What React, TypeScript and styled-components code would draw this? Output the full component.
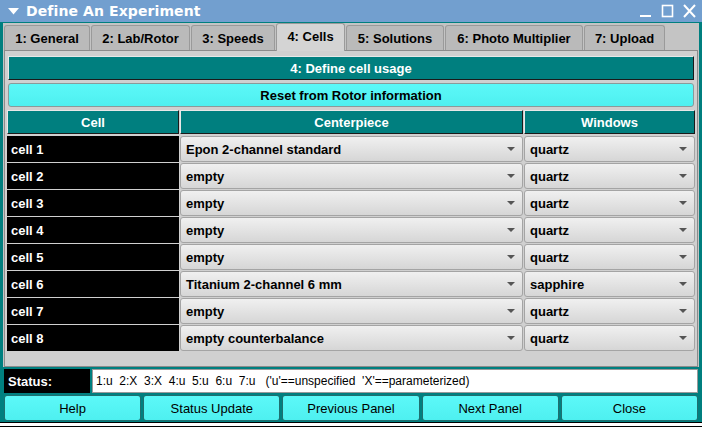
import React from "react";
import styled, { createGlobalStyle } from "styled-components";

const Global = createGlobalStyle`
  html, body { margin: 0; padding: 0; background: #ffffff; }
  * { box-sizing: border-box; }
`;

const Window = styled.div`
  width: 702px;
  height: 427px;
  display: flex;
  flex-direction: column;
  background: #007f7f;
  font-family: "Liberation Sans", Arial, sans-serif;
  overflow: hidden;
`;

const TitleBar = styled.div`
  height: 22px;
  flex: none;
  background: #729fcf;
  display: flex;
  align-items: center;
  padding: 0 6px 0 8px;
  color: #ffffff;
`;

const TitleText = styled.span`
  font-family: "DejaVu Sans", sans-serif;
  font-weight: bold;
  font-size: 14px;
  margin-left: 7px;
  flex: 1;
  letter-spacing: 0.1px;
`;

const Controls = styled.div`
  display: flex;
  gap: 9px;
  align-items: center;
`;

const Body = styled.div`
  flex: 1;
  display: flex;
  flex-direction: column;
  padding: 1px 4px 0 4px;
`;

const TabWidget = styled.div`
  background: #c4c4c4;
  display: flex;
  flex-direction: column;
  height: 344px;
  margin: 0 -1px;
  padding: 0 1px;
`;

const TabBar = styled.div`
  height: 27px;
  display: flex;
  align-items: flex-end;
`;

const Tab = styled.div<{ $w: number; $active?: boolean }>`
  width: ${(p) => p.$w}px;
  height: ${(p) => (p.$active ? 28 : 25)}px;
  margin-bottom: ${(p) => (p.$active ? -1 : 0)}px;
  position: relative;
  z-index: ${(p) => (p.$active ? 2 : 1)};
  background: ${(p) => (p.$active ? "#d4d4d4" : "#bababa")};
  border: 1px solid #9a9a9a;
  border-bottom: none;
  border-radius: 3px 3px 0 0;
  margin-right: 1px;
  display: flex;
  align-items: center;
  justify-content: center;
  font-weight: bold;
  font-size: 13px;
  color: #000000;
  padding-bottom: ${(p) => (p.$active ? 3 : 0)}px;
`;

const Panel = styled.div`
  flex: 1;
  background: #d0d0d0;
  border: 1px solid #8c8c8c;
  display: flex;
  flex-direction: column;
  padding: 5px 3px 0 2px;
`;

const Banner = styled.div`
  height: 24px;
  margin: 0 0 3px 1px;
  background: #007f7f;
  border: 1px solid;
  border-color: #e8e8e8 #1a1a1a #1a1a1a #e8e8e8;
  color: #ffffff;
  font-weight: bold;
  font-size: 13px;
  display: flex;
  align-items: center;
  justify-content: center;
`;

const WideButton = styled.div`
  height: 24px;
  margin: 0 0 3px 1px;
  background: linear-gradient(#5cf8f8, #4ef0f0);
  border: 1px solid #8a9a9a;
  border-radius: 3px;
  color: #000000;
  font-weight: bold;
  font-size: 13px;
  display: flex;
  align-items: center;
  justify-content: center;
`;

const Grid = styled.div`
  display: grid;
  grid-template-columns: 172px 343px 171px;
  column-gap: 1px;
  row-gap: 1px;
`;

const HeaderCell = styled.div`
  height: 24px;
  margin-bottom: 1px;
  background: #007f7f;
  border: 1px solid;
  border-color: #e8e8e8 #1a1a1a #1a1a1a #e8e8e8;
  color: #ffffff;
  font-weight: bold;
  font-size: 13px;
  display: flex;
  align-items: center;
  justify-content: center;
`;

const CellLabel = styled.div`
  height: 26px;
  background: #000000;
  color: #ffffff;
  font-weight: bold;
  font-size: 13px;
  display: flex;
  align-items: center;
  padding-left: 4px;
`;

const Combo = styled.div`
  height: 26px;
  background: linear-gradient(#f0f0f0, #d6d6d6);
  border: 1px solid #a4a4a4;
  border-radius: 3px;
  display: flex;
  align-items: center;
  padding: 0 7px 0 5px;
  color: #000000;
  font-weight: bold;
  font-size: 13px;
`;

const ComboText = styled.span`
  flex: 1;
`;

const Arrow = styled.span`
  width: 0;
  height: 0;
  border-left: 4px solid transparent;
  border-right: 4px solid transparent;
  border-top: 4px solid #555555;
`;

const StatusRow = styled.div`
  height: 24px;
  margin-top: 2px;
  display: flex;
  gap: 2px;
`;

const StatusLabel = styled.div`
  width: 86px;
  background: #000000;
  color: #ffffff;
  font-weight: bold;
  font-size: 13px;
  display: flex;
  align-items: center;
  padding-left: 4px;
`;

const StatusField = styled.div`
  flex: 1;
  background: #ffffff;
  border: 1px solid #9a9a9a;
  font-size: 12px;
  color: #000000;
  display: flex;
  align-items: center;
  padding-left: 3px;
  white-space: pre;
`;

const ButtonRow = styled.div`
  height: 26px;
  margin-top: 2px;
  display: grid;
  grid-template-columns: repeat(5, 1fr);
  gap: 2px;
`;

const Button = styled.div`
  background: linear-gradient(#5cf8f8, #4ef0f0);
  border: 1px solid #1f6f6f;
  border-radius: 3px;
  color: #000000;
  font-size: 13px;
  display: flex;
  align-items: center;
  justify-content: center;
`;

const BottomEdge = styled.div`
  flex: 1;
  margin: 1px -4px 0 -4px;
  border-top: 1px solid #000000;
  background: #ffffff;
  border-bottom: 1px solid #000000;
`;

const tabs = [
  { label: "1: General", w: 86 },
  { label: "2: Lab/Rotor", w: 99 },
  { label: "3: Speeds", w: 84 },
  { label: "4: Cells", w: 69, active: true },
  { label: "5: Solutions", w: 98 },
  { label: "6: Photo Multiplier", w: 138 },
  { label: "7: Upload", w: 81 },
];

const rows = [
  ["cell 1", "Epon 2-channel standard", "quartz"],
  ["cell 2", "empty", "quartz"],
  ["cell 3", "empty", "quartz"],
  ["cell 4", "empty", "quartz"],
  ["cell 5", "empty", "quartz"],
  ["cell 6", "Titanium 2-channel 6 mm", "sapphire"],
  ["cell 7", "empty", "quartz"],
  ["cell 8", "empty counterbalance", "quartz"],
];

const buttons = ["Help", "Status Update", "Previous Panel", "Next Panel", "Close"];

export default function App() {
  return (
    <>
      <Global />
      <Window>
        <TitleBar>
          <svg width="11" height="7" viewBox="0 0 11 7">
            <polygon points="0,0 11,0 5.5,6.5" fill="#ffffff" />
          </svg>
          <TitleText>Define An Experiment</TitleText>
          <Controls>
            <svg width="13" height="14" viewBox="0 0 13 14">
              <rect x="1" y="11" width="11" height="2" fill="#ffffff" />
            </svg>
            <svg width="13" height="14" viewBox="0 0 13 14">
              <rect x="1.5" y="1.5" width="10" height="11" fill="none" stroke="#ffffff" strokeWidth="1.6" />
            </svg>
            <svg width="13" height="14" viewBox="0 0 13 14">
              <path d="M1 1 L12 13 M12 1 L1 13" stroke="#ffffff" strokeWidth="2" />
            </svg>
          </Controls>
        </TitleBar>
        <Body>
          <TabWidget>
            <TabBar>
              {tabs.map((t) => (
                <Tab key={t.label} $w={t.w} $active={t.active}>
                  {t.label}
                </Tab>
              ))}
            </TabBar>
            <Panel>
              <Banner>4: Define cell usage</Banner>
              <WideButton>Reset from Rotor information</WideButton>
              <Grid>
                <HeaderCell>Cell</HeaderCell>
                <HeaderCell>Centerpiece</HeaderCell>
                <HeaderCell>Windows</HeaderCell>
                {rows.map(([c, p, w]) => (
                  <React.Fragment key={c}>
                    <CellLabel>{c}</CellLabel>
                    <Combo>
                      <ComboText>{p}</ComboText>
                      <Arrow />
                    </Combo>
                    <Combo>
                      <ComboText>{w}</ComboText>
                      <Arrow />
                    </Combo>
                  </React.Fragment>
                ))}
              </Grid>
            </Panel>
          </TabWidget>
          <StatusRow>
            <StatusLabel>Status:</StatusLabel>
            <StatusField>{"1:u  2:X  3:X  4:u  5:u  6:u  7:u   ('u'==unspecified  'X'==parameterized)"}</StatusField>
          </StatusRow>
          <ButtonRow>
            {buttons.map((b) => (
              <Button key={b}>{b}</Button>
            ))}
          </ButtonRow>
          <BottomEdge />
        </Body>
      </Window>
    </>
  );
}
